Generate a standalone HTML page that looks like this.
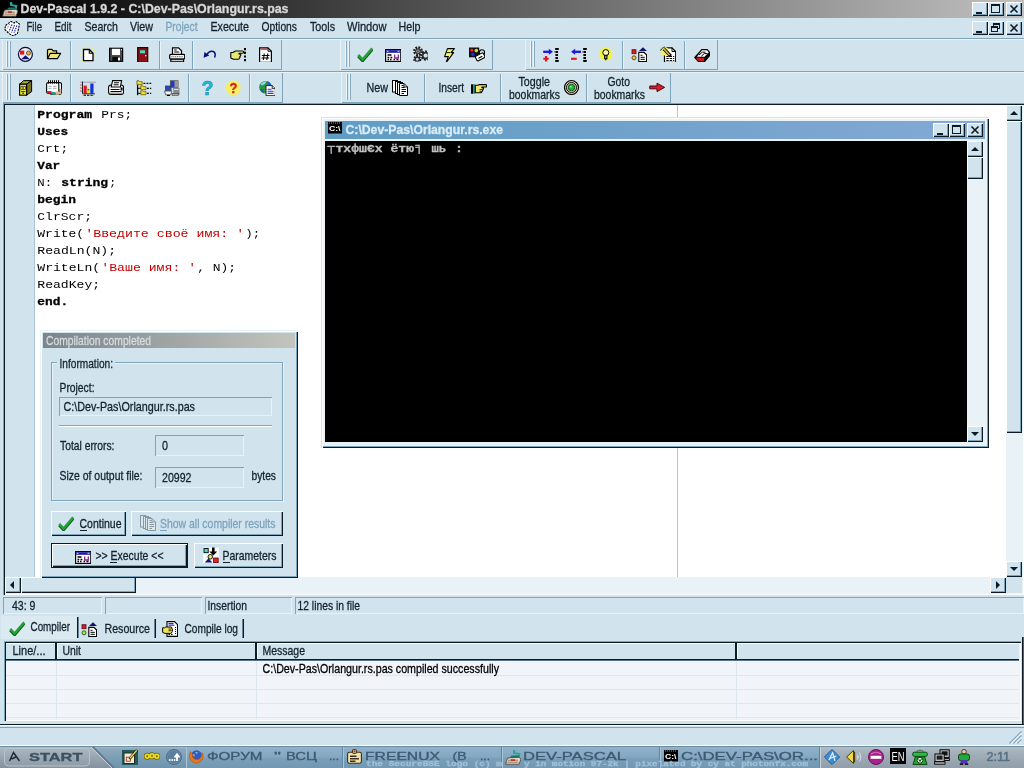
<!DOCTYPE html>
<html><head><meta charset="utf-8"><title>Dev-Pascal 1.9.2 - C:\Dev-Pas\Orlangur.rs.pas</title>
<style>
html,body{margin:0;padding:0;width:1024px;height:768px;overflow:hidden;background:#d1e3ed;}
#r{position:relative;width:1024px;height:768px;overflow:hidden;font-family:"Liberation Sans",sans-serif;}
#r>div,#r>svg{position:absolute;}
#r>svg{will-change:transform;}
#t{left:0;top:0;will-change:transform;}
</style></head><body><div id="r">
<div style="left:0px;top:0px;width:1024px;height:18px;background:linear-gradient(90deg,#000 0%,#c0c0c0 100%);"></div>
<svg style="left:2px;top:1px" width="16" height="16" viewBox="0 0 16 16"><path d="M8 1h2.2v2.2l5.3 1-1 4.3h-2.2l.8-2.8-5.1-1z" fill="#2aa39b"/><path d="M6.5 6.5h7l1.5 2h-10z" fill="#1f6f6a"/><path d="M2.5 9L14 8.3l2 1.7-2 5.2H.6z" fill="#e6dcc4" stroke="#4a3c30" stroke-width=".8"/><path d="M3 11.2h10M2.3 13.2h11" stroke="#8a6a58" stroke-width=".9"/><rect x="6" y="10.3" width="4" height="1.6" fill="#b03030"/></svg>
<div style="left:972px;top:2px;width:16px;height:14px;background:#d1e3ed;box-shadow:inset 1px 1px 0 #ffffff,inset -1px -1px 0 #0c1a26,inset -2px -2px 0 #7fa5bd;"></div>
<svg style="left:972px;top:2px" width="16" height="14" viewBox="0 0 16 14"><rect x="4" y="10" width="6" height="2" fill="#0c1a26"/></svg>
<div style="left:988px;top:2px;width:16px;height:14px;background:#d1e3ed;box-shadow:inset 1px 1px 0 #ffffff,inset -1px -1px 0 #0c1a26,inset -2px -2px 0 #7fa5bd;"></div>
<svg style="left:988px;top:2px" width="16" height="14" viewBox="0 0 16 14"><rect x="3.5" y="2.5" width="8" height="8" fill="none" stroke="#0c1a26"/><rect x="3" y="2" width="9" height="2" fill="#0c1a26"/></svg>
<div style="left:1006px;top:2px;width:16px;height:14px;background:#d1e3ed;box-shadow:inset 1px 1px 0 #ffffff,inset -1px -1px 0 #0c1a26,inset -2px -2px 0 #7fa5bd;"></div>
<svg style="left:1006px;top:2px" width="16" height="14" viewBox="0 0 16 14"><path d="M4.5 3.5l7 7M11.5 3.5l-7 7" stroke="#0c1a26" stroke-width="1.6" fill="none"/></svg>
<svg style="left:4px;top:20px" width="16" height="16" viewBox="0 0 16 16"><path d="M1.5 5.5L7 1.5l3 1.5 2-1.5 3.5 2.5-2 9.5-4.500 2.500-4-2.500L.8 9.500z" fill="#fff" stroke="#000" stroke-width="1.1" stroke-dasharray="2.2 .9"/><path d="M8 4.500l-3 7M10.5 5l-3 7.500M13 5.500l-3 7.500" stroke="#2028b8" stroke-width="1.1" stroke-dasharray="1.6 .8"/><path d="M5.500 4l-2.500 5" stroke="#555" stroke-width=".9" stroke-dasharray="1 1"/></svg>
<div style="left:972px;top:21px;width:16px;height:14px;background:#d1e3ed;box-shadow:inset 1px 1px 0 #ffffff,inset -1px -1px 0 #0c1a26,inset -2px -2px 0 #7fa5bd;"></div>
<svg style="left:972px;top:21px" width="16" height="14" viewBox="0 0 16 14"><rect x="4" y="10" width="6" height="2" fill="#0c1a26"/></svg>
<div style="left:988px;top:21px;width:16px;height:14px;background:#d1e3ed;box-shadow:inset 1px 1px 0 #ffffff,inset -1px -1px 0 #0c1a26,inset -2px -2px 0 #7fa5bd;"></div>
<svg style="left:988px;top:21px" width="16" height="14" viewBox="0 0 16 14"><rect x="5.5" y="2.5" width="6" height="5" fill="none" stroke="#0c1a26"/><rect x="5" y="2" width="7" height="2" fill="#0c1a26"/><rect x="3.5" y="5.5" width="6" height="5" fill="#d1e3ed" stroke="#0c1a26"/><rect x="3" y="5" width="7" height="2" fill="#0c1a26"/></svg>
<div style="left:1006px;top:21px;width:16px;height:14px;background:#d1e3ed;box-shadow:inset 1px 1px 0 #ffffff,inset -1px -1px 0 #0c1a26,inset -2px -2px 0 #7fa5bd;"></div>
<svg style="left:1006px;top:21px" width="16" height="14" viewBox="0 0 16 14"><path d="M4.5 3.5l7 7M11.5 3.5l-7 7" stroke="#0c1a26" stroke-width="1.6" fill="none"/></svg>
<div style="left:0px;top:38px;width:1024px;height:1px;background:#7fa5bd;"></div>
<div style="left:0px;top:39px;width:1024px;height:1px;background:#e9f2f7;"></div>
<div style="left:0px;top:71px;width:1024px;height:1px;background:#7fa5bd;"></div>
<div style="left:0px;top:72px;width:1024px;height:1px;background:#e9f2f7;"></div>
<div style="left:2px;top:39px;width:280px;height:31px;box-shadow:inset 1px 1px 0 #e9f2f7,inset -1px -1px 0 #7fa5bd;"></div>
<div style="left:6px;top:41px;width:1px;height:26px;background:#eef5f9;"></div>
<div style="left:7px;top:41px;width:1px;height:26px;background:#86a9c0;"></div>
<div style="left:9px;top:41px;width:1px;height:26px;background:#eef5f9;"></div>
<div style="left:10px;top:41px;width:1px;height:26px;background:#86a9c0;"></div>
<svg style="left:17px;top:46px" width="16" height="16" viewBox="0 0 16 16"><circle cx="8.4" cy="8.300" r="7" fill="#e4eef3" stroke="#0c0c34" stroke-width="1.200"/><rect x="3" y="4.600" width="4.200" height="4" fill="#e01822"/><circle cx="11.500" cy="7" r="2" fill="#f6b44a" stroke="#5a3a08" stroke-width=".8"/><path d="M8.500 9.300L12.800 13.200H4.200z" fill="#101078"/></svg>
<svg style="left:46px;top:46px" width="16" height="16" viewBox="0 0 16 16"><path d="M1.500 12.500V4.200Q1.500 3.300 2.500 3.300H5.800L7.200 4.800H10.600V7.300" fill="#efe67c" stroke="#000" stroke-width="1.200"/><path d="M1.500 12.700L4.300 7.300H14.700L11.300 12.700z" fill="#efe67c" stroke="#000" stroke-width="1.200" stroke-linejoin="round"/></svg>
<svg style="left:80px;top:46px" width="16" height="16" viewBox="0 0 16 16"><g fill="#f2f44a"><rect x="1" y="2.500" width="1.600" height="1.600"/><rect x=".2" y="8.500" width="1.600" height="1.600"/><rect x="14" y="3" width="1.600" height="1.600"/><rect x="14.300" y="8.500" width="1.600" height="1.600"/><rect x="6" y=".6" width="1.600" height="1.600"/><rect x="11" y="1" width="1.600" height="1.600"/><rect x="1.500" y="13.500" width="1.600" height="1.600"/></g><path d="M3.500 3.500H9.300L13 7.200V14.600H3.500z" fill="#fff" stroke="#000" stroke-width="1.300"/><path d="M9.300 3.500V7.200H13" fill="none" stroke="#000" stroke-width="1.100"/></svg>
<svg style="left:108px;top:46px" width="16" height="16" viewBox="0 0 16 16"><rect x="1.600" y="2.300" width="13" height="13" fill="#4e4e4e" stroke="#000" stroke-width="1.200"/><rect x="4" y="2.800" width="8" height="6.200" fill="#fff"/><rect x="4.300" y="10.800" width="8.200" height="4.200" fill="#0a0a0a"/><rect x="10" y="11.500" width="2" height="3" fill="#fff"/><rect x="13" y="3.200" width="1" height="1" fill="#fff"/></svg>
<svg style="left:136px;top:46px" width="16" height="16" viewBox="0 0 16 16"><rect x="1.700" y="1.600" width="10" height="14.800" fill="#8c1016" stroke="#1a0204" stroke-width="1.200"/><rect x="4" y="4.300" width="5" height="3" fill="#46dcc4"/><circle cx="9.800" cy="9.800" r=".8" fill="#fff"/></svg>
<svg style="left:169px;top:46px" width="16" height="16" viewBox="0 0 16 16"><path d="M3.500 8.500V1.800H9.500L12.500 4.800V8.500" fill="#fff" stroke="#000" stroke-width="1.200"/><path d="M5.200 4h2.500M5.200 6h5" stroke="#000" stroke-width="1.100"/><rect x=".7" y="8.300" width="15" height="4.800" rx="1.200" fill="#f4f4f4" stroke="#000" stroke-width="1.200"/><path d="M2.500 10.600h11.500" stroke="#777" stroke-width="1.400" stroke-dasharray="1 .8"/><rect x="1.800" y="13.200" width="12.800" height="2.600" fill="#c8c8c8" stroke="#000" stroke-width="1.100"/></svg>
<svg style="left:202px;top:46px" width="16" height="16" viewBox="0 0 16 16"><path d="M4.500 9Q7.500 4.200 11.300 5.500Q14.300 7 12.600 11.600" stroke="#10107c" stroke-width="1.500" fill="none"/><path d="M1.600 11.800L2.500 6 7.300 9.600z" fill="#10107c"/></svg>
<svg style="left:230px;top:46px" width="16" height="16" viewBox="0 0 16 16"><path d="M15 2v14" stroke="#000" stroke-width="2" stroke-dasharray="2.200 1.500"/><path d="M.8 6.500H3L5.500 5H12.500Q13.800 5 13.800 6.100Q13.800 7.200 12.500 7.200H9V8H9.800Q10.800 8 10.800 9Q10.800 10 9.800 10.200Q10.500 11.500 9.300 12Q9.500 13.200 8 13.300H3.500L.8 12z" fill="#e6ea74" stroke="#000" stroke-width="1.100" stroke-linejoin="round"/></svg>
<svg style="left:258px;top:46px" width="16" height="16" viewBox="0 0 16 16"><path d="M1.600 1.800H10L13.400 5.200V16.300H1.600z" fill="#fff" stroke="#000" stroke-width="1.200"/><path d="M10 1.800V5.200H13.400" fill="none" stroke="#000"/><path d="M2.600 3.200H9.500" stroke="#e02424" stroke-width="1.200"/><path d="M6.300 7.500L5.300 14M9.800 7.500L8.800 14M3.800 9.500H11.500M3.500 12H11.200" stroke="#000" stroke-width="1.100" fill="none"/></svg>
<div style="left:70px;top:41px;width:1px;height:28px;background:#7fa5bd;"></div>
<div style="left:71px;top:41px;width:1px;height:28px;background:#e9f2f7;"></div>
<div style="left:159px;top:41px;width:1px;height:28px;background:#7fa5bd;"></div>
<div style="left:160px;top:41px;width:1px;height:28px;background:#e9f2f7;"></div>
<div style="left:192px;top:41px;width:1px;height:28px;background:#7fa5bd;"></div>
<div style="left:193px;top:41px;width:1px;height:28px;background:#e9f2f7;"></div>
<div style="left:340px;top:39px;width:153px;height:31px;box-shadow:inset 1px 1px 0 #e9f2f7,inset -1px -1px 0 #7fa5bd;"></div>
<div style="left:345px;top:41px;width:1px;height:26px;background:#eef5f9;"></div>
<div style="left:346px;top:41px;width:1px;height:26px;background:#86a9c0;"></div>
<div style="left:348px;top:41px;width:1px;height:26px;background:#eef5f9;"></div>
<div style="left:349px;top:41px;width:1px;height:26px;background:#86a9c0;"></div>
<svg style="left:357px;top:46px" width="16" height="16" viewBox="0 0 16 16"><path d="M1.2 10.3L5.6 15 15.2 3.6" stroke="#0b5418" stroke-width="2.6" fill="none"/><path d="M1.2 9L5.6 13.6 15.2 2.4" stroke="#22a136" stroke-width="2.6" fill="none"/></svg>
<svg style="left:385px;top:46px" width="16" height="16" viewBox="0 0 16 16"><rect x=".6" y="3.600" width="15.200" height="11.800" fill="#fff" stroke="#000" stroke-width="1.200"/><rect x="1.200" y="4.200" width="14" height="2.600" fill="#1a1aa4"/><rect x="12.500" y="4.800" width="2" height="1" fill="#cfd8ff"/><rect x="2" y="4.800" width="1.500" height="1" fill="#cfd8ff"/><path d="M2.500 9h4M2.500 11.500h1.800M5.500 11.500h1.800M2.500 13.500h1.500M5 13.500h1.500M8.500 13.500h1.500M11.500 13.500h2" stroke="#000" stroke-width="1.300"/><path d="M9.700 8.500V12H13.300V8.500" stroke="#86208a" stroke-width="1.300" fill="none"/></svg>
<svg style="left:413px;top:46px" width="16" height="16" viewBox="0 0 16 16"><g fill="none" stroke="#141414"><circle cx="5" cy="5.200" r="3.700" stroke-width="2.400" stroke-dasharray="1.700 1.200"/><circle cx="12.600" cy="9.600" r="3.900" stroke-width="2.400" stroke-dasharray="1.700 1.200"/><circle cx="4.300" cy="13.300" r="3" stroke-width="2.200" stroke-dasharray="1.500 1.100"/></g><circle cx="5" cy="5.200" r="3" fill="#3a3a3a"/><circle cx="5" cy="5.200" r="1.700" fill="#9c9c9c"/><circle cx="5" cy="5.200" r=".7" fill="#222"/><circle cx="12.600" cy="9.600" r="3" fill="none" stroke="#2c2c2c" stroke-width="1.800"/><circle cx="4.300" cy="13.300" r="2.200" fill="none" stroke="#2c2c2c" stroke-width="1.600"/><rect x="14.800" y="4" width="2" height="11" fill="#d1e3ed"/><rect x="0" y="15.600" width="9" height="1.500" fill="#d1e3ed"/></svg>
<svg style="left:441px;top:46px" width="16" height="16" viewBox="0 0 16 16"><path d="M6.500 2.600H13.400L10 6.600H12.600L5 16.800L7.300 10.600H3.600z" fill="#f3f372" stroke="#000" stroke-width="1.100" stroke-linejoin="round"/><path d="M5.500 6.600H9" stroke="#000" stroke-width=".9"/></svg>
<svg style="left:469px;top:46px" width="16" height="16" viewBox="0 0 16 16"><rect x="0" y="1.500" width="10.200" height="9.800" fill="#0e0e0e"/><circle cx="2.800" cy="4.200" r="1.600" fill="#e81c24"/><circle cx="7.300" cy="4.600" r="1.800" fill="#c4e234"/><circle cx="3.800" cy="8.300" r="1.900" fill="#1c2cd4"/><circle cx="13" cy="6.500" r="2.700" fill="none" stroke="#000" stroke-width="1.100"/><rect x="6.800" y="8.300" width="8.800" height="5.200" rx="1.200" transform="rotate(-28 11.200 11)" fill="#fff" stroke="#000" stroke-width="1.100"/><path d="M9.500 12.300l3.800-2" stroke="#000" stroke-width="1.100"/></svg>
<div style="left:525px;top:39px;width:193px;height:31px;box-shadow:inset 1px 1px 0 #e9f2f7,inset -1px -1px 0 #7fa5bd;"></div>
<div style="left:530px;top:41px;width:1px;height:26px;background:#eef5f9;"></div>
<div style="left:531px;top:41px;width:1px;height:26px;background:#86a9c0;"></div>
<div style="left:533px;top:41px;width:1px;height:26px;background:#eef5f9;"></div>
<div style="left:534px;top:41px;width:1px;height:26px;background:#86a9c0;"></div>
<svg style="left:543px;top:46px" width="16" height="16" viewBox="0 0 16 16"><path d="M.2 5.800H7" stroke="#1a1ad8" stroke-width="2.300"/><path d="M5.800 2.800L10 5.800 5.800 8.800z" fill="#1a1ad8"/><path d="M.3 12.800H5.700M3 10.100V15.500" stroke="#e41424" stroke-width="2.100"/><path d="M13.700 2V15.800" stroke="#000" stroke-width="2.600" stroke-dasharray="1.900 1.100"/><rect x="12.400" y="2" width="3.400" height="1.900" fill="#000"/><rect x="12.400" y="13.900" width="3.400" height="1.900" fill="#000"/><rect x="11.200" y="5" width="1.400" height="1.500" fill="#c03a7a"/></svg>
<svg style="left:571px;top:46px" width="16" height="16" viewBox="0 0 16 16"><path d="M3 5.800H10" stroke="#1a1ad8" stroke-width="2.300"/><path d="M4.200 2.800L0 5.800 4.200 8.800z" fill="#1a1ad8"/><path d="M0 12.800H5.700" stroke="#e41424" stroke-width="2.100"/><path d="M13.700 2V15.800" stroke="#000" stroke-width="2.600" stroke-dasharray="1.900 1.100"/><rect x="12.400" y="2" width="3.400" height="1.900" fill="#000"/><rect x="12.400" y="13.900" width="3.400" height="1.900" fill="#000"/><rect x="11.200" y="5" width="1.400" height="1.500" fill="#c03a7a"/></svg>
<svg style="left:598px;top:46px" width="16" height="16" viewBox="0 0 16 16"><circle cx="7.800" cy="8" r="6.600" fill="#f3f33e"/><circle cx="7.800" cy="6.600" r="3" fill="#fffbb0" stroke="#000" stroke-width="1"/><rect x="6.600" y="9.300" width="2.400" height="3.400" fill="#8a8a8a" stroke="#000" stroke-width=".9"/><path d="M7.800 12.700v1.500" stroke="#000" stroke-width="1.200"/></svg>
<svg style="left:631px;top:46px" width="16" height="16" viewBox="0 0 16 16"><rect x="1" y="3.700" width="4" height="4" fill="#dc1c2c" stroke="#5a0a10" stroke-width=".8"/><path d="M12 1.200L16 4.900H8z" fill="#14146c"/><circle cx="3" cy="11.800" r="2" fill="#f6c448" stroke="#5a3c08" stroke-width=".9"/><path d="M7.800 6.400H13L15.600 9V15.600H7.800z" fill="#fff" stroke="#000" stroke-width="1.100"/><path d="M9.500 9.300h2M9.500 11.300h4.300M9.500 13.300h4.300" stroke="#000" stroke-width="1"/></svg>
<svg style="left:660px;top:46px" width="16" height="16" viewBox="0 0 16 16"><path d="M4.500 1.800H12L15.700 5.500V16.300H4.500z" fill="#fff" stroke="#000" stroke-width="1.200"/><path d="M12 1.800V5.500H15.700" fill="none" stroke="#000"/><path d="M6.300 10.500h8M6.300 12.500h8M6.300 14.500h8" stroke="#000" stroke-width="1.100" stroke-dasharray="2.400 1"/><circle cx="4.600" cy="5.300" r="4.300" fill="#eef06e"/><path d="M.6 4.500Q1.500 1.500 4.800 1" stroke="#000" stroke-width="1" fill="none"/><path d="M1 3Q2 1.500 3.500 1.200" stroke="#5ad8a8" stroke-width="1.200" fill="none"/><path d="M3.800 2.800L10.800 10.200" stroke="#000" stroke-width="3.200"/><path d="M3.600 2.600L9.600 9" stroke="#d2b050" stroke-width="1.700"/></svg>
<svg style="left:694px;top:46px" width="16" height="16" viewBox="0 0 16 16"><path d="M0 11.500L7.500 3H13.500L16 6V10L11 16H4z" fill="#0a0406"/><path d="M3 10.700L8 4.300H13L14.800 6.500L10.500 10.700z" fill="#fff"/><path d="M5 9L8.300 6.200H11.500M7.300 10.200L10.300 7.600H13.600" stroke="#000" stroke-width="1" fill="none"/><path d="M1.600 11.800H10.300L10 15H4.600z" fill="#cc1626"/></svg>
<div style="left:622px;top:41px;width:1px;height:28px;background:#7fa5bd;"></div>
<div style="left:623px;top:41px;width:1px;height:28px;background:#e9f2f7;"></div>
<div style="left:684px;top:41px;width:1px;height:28px;background:#7fa5bd;"></div>
<div style="left:685px;top:41px;width:1px;height:28px;background:#e9f2f7;"></div>
<div style="left:2px;top:72px;width:281px;height:31px;box-shadow:inset 1px 1px 0 #e9f2f7,inset -1px -1px 0 #7fa5bd;"></div>
<div style="left:6px;top:74px;width:1px;height:26px;background:#eef5f9;"></div>
<div style="left:7px;top:74px;width:1px;height:26px;background:#86a9c0;"></div>
<div style="left:9px;top:74px;width:1px;height:26px;background:#eef5f9;"></div>
<div style="left:10px;top:74px;width:1px;height:26px;background:#86a9c0;"></div>
<svg style="left:18px;top:80px" width="16" height="16" viewBox="0 0 16 16"><path d="M1.600 4.200L5.600 .6H13.600L8.600 4.200z" fill="#a6a634" stroke="#000" stroke-width="1"/><path d="M8.600 4.200L13.600 .6V11.600L8.600 15.200z" fill="#74741c" stroke="#000" stroke-width="1"/><rect x="1.600" y="4.200" width="7" height="11" fill="#ece632" stroke="#000" stroke-width="1.100"/><rect x="2.900" y="6.300" width="4.400" height="3.200" fill="#f6f25a" stroke="#222" stroke-width=".7"/><path d="M2.900 11.500h4.400" stroke="#222" stroke-width=".8"/><path d="M4.200 8h1.800M4.200 13.200h1.800" stroke="#000" stroke-width="1"/></svg>
<svg style="left:46px;top:80px" width="16" height="16" viewBox="0 0 16 16"><rect x="3.500" y="2.600" width="12" height="11.500" rx="1.600" fill="#fff" stroke="#000" stroke-width="1.100"/><rect x="13" y="9" width="2.300" height="5" fill="#d8b88a"/><rect x=".6" y="2.600" width="12.200" height="10.800" rx="1.600" fill="#fff" stroke="#000" stroke-width="1.100"/><path d="M2.500 .2V3.600M4.500 .2V3.600M6.500 .2V3.600M8.500 .2V3.600M10.500 .2V3.600M12.500 .2V3.600" stroke="#000" stroke-width="1"/><path d="M2.500 6.300h3M7 6.300h3.500M2.500 8.300h3M7 8.300h3.500" stroke="#9aa" stroke-width="1"/><rect x="1.200" y="11" width="4.300" height="2.600" fill="#d82030"/><rect x="5.500" y="12" width="4" height="2.600" fill="#2a9a90"/><rect x="9.500" y="11.500" width="3.500" height="3.300" fill="#d8b88a"/></svg>
<svg style="left:80px;top:80px" width="16" height="16" viewBox="0 0 16 16"><path d="M0 2.200H16.400" stroke="#9aa0a8" stroke-width="1"/><path d="M2.500 1.500V13.600" stroke="#222" stroke-width="1"/><path d="M0 5h2M0 8h2M0 11h2" stroke="#e03a4a" stroke-width=".9"/><rect x="3.600" y="5.600" width="3.200" height="8" fill="#e21424"/><rect x="6.800" y="8.600" width="3.200" height="5" fill="#f4e224"/><rect x="7.500" y="9.300" width="1.800" height="1" fill="#222"/><rect x="10.300" y="3.500" width="3.200" height="10.100" fill="#1430da"/><path d="M2.500 13.800H15" stroke="#222" stroke-width=".9"/><path d="M3.600 15.200H14" stroke="#000" stroke-width="1.100" stroke-dasharray="2.400 1"/></svg>
<svg style="left:108px;top:80px" width="16" height="16" viewBox="0 0 16 16"><rect x=".6" y="5" width="15" height="9.500" rx="2.400" fill="#fff" stroke="#000" stroke-width="1.100"/><path d="M3.200 7L4.600 .6H13.600L12.400 7z" fill="#fff" stroke="#000" stroke-width="1.100"/><path d="M6 2.800h5M5.600 4.800h5" stroke="#000" stroke-width="1"/><path d="M2.500 9.500h9M2.500 11.500h11" stroke="#000" stroke-width="1"/><path d="M2 13.200h12" stroke="#888" stroke-width="1.200"/><rect x="12.600" y="7.500" width="2" height="3" fill="#000"/></svg>
<svg style="left:136px;top:80px" width="16" height="16" viewBox="0 0 16 16"><path d="M1.600 .8V15.200" stroke="#000" stroke-width="1.300"/><path d="M1.600 3.400h2M1.600 8.300h3.500M1.600 13.300h3.500" stroke="#000" stroke-width="1"/><g fill="#f0e23e" stroke="#6a5a00" stroke-width=".8"><path d="M1 .8h2l.8.900h2.400v3H1z"/><path d="M4.800 5.800h2l.8.900h2.400v3H4.800z"/><path d="M4.800 10.800h2l.8.900h2.400v3H4.800z"/></g><path d="M7.500 3.400H15.200M11 8.300H15.200M11 13.300H15.200" stroke="#000" stroke-width="1.200" stroke-dasharray="1.800 1.200"/></svg>
<svg style="left:164px;top:80px" width="16" height="16" viewBox="0 0 16 16"><rect x="6.500" y=".8" width="7.500" height="6.500" fill="#1c3cd0" stroke="#555" stroke-width="1"/><rect x="10.500" y=".8" width="3.600" height="6.500" fill="#9a9a9a"/><path d="M9 8h6.500v6.500H9.500z" fill="#8a8a8a"/><path d="M10 9.500h4.500" stroke="#ddd" stroke-width="1"/><rect x="1.500" y="6" width="5.500" height="4.800" fill="#2244d8" stroke="#444" stroke-width=".9"/><path d="M.6 11h7.200l-1 3.800H1.600z" fill="#f4f4f4" stroke="#555" stroke-width=".9"/><path d="M8 13.500h7l-1 2.300H8.500z" fill="#b0b0b0" stroke="#444" stroke-width=".8"/><path d="M3 15.500h3" stroke="#000" stroke-width="1.200"/></svg>
<svg style="left:259px;top:80px" width="16" height="16" viewBox="0 0 16 16"><circle cx="6.500" cy="7.200" r="6.300" fill="#2a9440"/><path d="M1.500 4Q4 1 7.500 1.200L6 4 3 5.500z" fill="#8ad4f0"/><path d="M1 9.500Q3 8 4.500 9.500L5 13Q2 12 1 9.500z" fill="#2058d0"/><path d="M8 1.200Q11.500 2 12.500 5.500L9.500 5z" fill="#2058d0"/><path d="M7 5.600H13.200L16.300 8.600V15.700H7z" fill="#fff" stroke="#222" stroke-width="1"/><path d="M13.200 5.600V8.600H16.300" fill="#d8c890" stroke="#222" stroke-width=".9"/><path d="M8.600 9.300h4M8.600 11.300h6M8.600 13.400h6" stroke="#1a38d0" stroke-width="1.100"/></svg>
<div style="left:70px;top:74px;width:1px;height:28px;background:#7fa5bd;"></div>
<div style="left:71px;top:74px;width:1px;height:28px;background:#e9f2f7;"></div>
<div style="left:188px;top:74px;width:1px;height:28px;background:#7fa5bd;"></div>
<div style="left:189px;top:74px;width:1px;height:28px;background:#e9f2f7;"></div>
<div style="left:249px;top:74px;width:1px;height:28px;background:#7fa5bd;"></div>
<div style="left:250px;top:74px;width:1px;height:28px;background:#e9f2f7;"></div>
<svg style="left:225px;top:80px" width="16" height="16" viewBox="0 0 16 16"><circle cx="8.300" cy="7.800" r="7.400" fill="#f7ef62"/></svg>
<div style="left:341px;top:72px;width:330px;height:31px;box-shadow:inset 1px 1px 0 #e9f2f7,inset -1px -1px 0 #7fa5bd;"></div>
<div style="left:346px;top:74px;width:1px;height:26px;background:#eef5f9;"></div>
<div style="left:347px;top:74px;width:1px;height:26px;background:#86a9c0;"></div>
<div style="left:349px;top:74px;width:1px;height:26px;background:#eef5f9;"></div>
<div style="left:350px;top:74px;width:1px;height:26px;background:#86a9c0;"></div>
<svg style="left:392px;top:80px" width="16" height="16" viewBox="0 0 16 16"><rect x=".5" y=".5" width="5" height="11.500" fill="#fff" stroke="#000" stroke-width="1"/><rect x="3.500" y="1.500" width="5" height="12" fill="#fff" stroke="#000" stroke-width="1"/><rect x="5.500" y="2.500" width="5" height="12" fill="#fff" stroke="#000" stroke-width="1"/><path d="M7.500 3.500H12L15.500 7V15.500H7.500z" fill="#fff" stroke="#000" stroke-width="1"/><path d="M12 3.500V7H15.500" fill="none" stroke="#000" stroke-width=".9"/><path d="M9.500 5.500h2M9.500 7.500h3M9.500 9.500h4.500M9.500 11.500h4.500M9.500 13.500h2.500" stroke="#000" stroke-width="1"/></svg>
<div style="left:424px;top:74px;width:1px;height:28px;background:#7fa5bd;"></div>
<div style="left:425px;top:74px;width:1px;height:28px;background:#e9f2f7;"></div>
<svg style="left:471px;top:80px" width="16" height="16" viewBox="0 0 16 16"><rect x="0" y="4.300" width="2.300" height="9.400" fill="#000"/><rect x="2.300" y="4.300" width="1.900" height="9.400" fill="#1f8c7c"/><path d="M4.300 5.200H7L8.500 4.600H14.600Q15.800 4.600 15.800 5.800Q15.800 7 14.600 7H10.800V7.600H11.600Q12.600 7.700 12.500 8.700Q12.400 9.600 11.500 9.700Q12 11 10.900 11.400Q11 12.600 9.800 12.800H4.300z" fill="#f0e86a" stroke="#000" stroke-width="1.100" stroke-linejoin="round"/><path d="M8.500 9.600h2.500M8.500 11.300h2" stroke="#000" stroke-width=".8"/></svg>
<div style="left:500px;top:74px;width:1px;height:28px;background:#7fa5bd;"></div>
<div style="left:501px;top:74px;width:1px;height:28px;background:#e9f2f7;"></div>
<svg style="left:564px;top:79px" width="16" height="16" viewBox="0 0 16 16"><circle cx="7.500" cy="8.500" r="7" fill="#ddd6b6" stroke="#000" stroke-width="1.200"/><circle cx="7.500" cy="8.500" r="5" fill="none" stroke="#000" stroke-width="1"/><circle cx="7.500" cy="8.500" r="3.200" fill="#1cbc3c" stroke="#0a5016" stroke-width="1"/><circle cx="6.800" cy="7.800" r="1" fill="#7aec8c"/></svg>
<div style="left:586px;top:74px;width:1px;height:28px;background:#7fa5bd;"></div>
<div style="left:587px;top:74px;width:1px;height:28px;background:#e9f2f7;"></div>
<svg style="left:649px;top:79px" width="16" height="16" viewBox="0 0 16 16"><path d="M.8 7H8V4.200L15.600 8.400L8 12.600V9.800H.8z" fill="#e21828" stroke="#4a0408" stroke-width="1" stroke-linejoin="round"/></svg>
<div style="left:3px;top:103px;width:1021px;height:492px;background:#fff;box-shadow:inset 1px 1px 0 #7fa5bd,inset 2px 2px 0 #0c1a26,inset -1px -1px 0 #ffffff,inset -2px -2px 0 #e9f2f7;"></div>
<div style="left:5px;top:105px;width:29px;height:472px;background:#d1e3ed;"></div>
<div style="left:34px;top:105px;width:1px;height:472px;background:#a9c4d4;"></div>
<div style="left:677px;top:105px;width:1px;height:472px;background:#c0c0c0;"></div>
<div style="left:1006px;top:105px;width:16px;height:472px;background:#e9f2f7;"></div>
<div style="left:1006px;top:105px;width:16px;height:16px;background:#d1e3ed;box-shadow:inset 1px 1px 0 #ffffff,inset -1px -1px 0 #0c1a26,inset -2px -2px 0 #7fa5bd;"></div>
<svg style="left:1006px;top:105px" width="16" height="16" viewBox="0 0 16 16"><path d="M4 10h8l-4-4z" fill="#0c1a26"/></svg>
<div style="left:1006px;top:121px;width:16px;height:312px;background:#d1e3ed;box-shadow:inset 1px 1px 0 #ffffff,inset -1px -1px 0 #0c1a26,inset -2px -2px 0 #7fa5bd;"></div>
<div style="left:1006px;top:561px;width:16px;height:16px;background:#d1e3ed;box-shadow:inset 1px 1px 0 #ffffff,inset -1px -1px 0 #0c1a26,inset -2px -2px 0 #7fa5bd;"></div>
<svg style="left:1006px;top:561px" width="16" height="16" viewBox="0 0 16 16"><path d="M4 6h8l-4 4z" fill="#0c1a26"/></svg>
<div style="left:5px;top:577px;width:1001px;height:16px;background:#e9f2f7;"></div>
<div style="left:5px;top:577px;width:16px;height:16px;background:#d1e3ed;box-shadow:inset 1px 1px 0 #ffffff,inset -1px -1px 0 #0c1a26,inset -2px -2px 0 #7fa5bd;"></div>
<svg style="left:5px;top:577px" width="16" height="16" viewBox="0 0 16 16"><path d="M9 4v8l-4-4z" fill="#0c1a26"/></svg>
<div style="left:21px;top:577px;width:115px;height:16px;background:#d1e3ed;box-shadow:inset 1px 1px 0 #ffffff,inset -1px -1px 0 #0c1a26,inset -2px -2px 0 #7fa5bd;"></div>
<div style="left:990px;top:577px;width:16px;height:16px;background:#d1e3ed;box-shadow:inset 1px 1px 0 #ffffff,inset -1px -1px 0 #0c1a26,inset -2px -2px 0 #7fa5bd;"></div>
<svg style="left:990px;top:577px" width="16" height="16" viewBox="0 0 16 16"><path d="M6 4v8l4-4z" fill="#0c1a26"/></svg>
<div style="left:1006px;top:577px;width:16px;height:16px;background:#d1e3ed;"></div>
<div style="left:40px;top:330px;width:258px;height:248px;background:#d1e3ed;box-shadow:inset 1px 1px 0 #e9f2f7,inset 2px 2px 0 #ffffff,inset -1px -1px 0 #0c1a26,inset -2px -2px 0 #7fa5bd;"></div>
<div style="left:43px;top:333px;width:252px;height:15px;background:linear-gradient(90deg,#7c858b,#c3c4bd);"></div>
<div style="left:51px;top:362px;width:232px;height:139px;border:1px solid #7fa5bd;box-sizing:border-box;box-shadow:1px 1px 0 #e9f2f7,inset 1px 1px 0 #e9f2f7;"></div>
<div style="left:57px;top:358px;width:58px;height:12px;background:#d1e3ed;"></div>
<div style="left:59px;top:397px;width:213px;height:19px;box-shadow:inset 1px 1px 0 #7fa5bd,inset -1px -1px 0 #e9f2f7;"></div>
<div style="left:59px;top:425px;width:213px;height:1px;background:#7fa5bd;"></div>
<div style="left:59px;top:426px;width:213px;height:1px;background:#ffffff;"></div>
<div style="left:155px;top:435px;width:89px;height:21px;box-shadow:inset 1px 1px 0 #7fa5bd,inset -1px -1px 0 #e9f2f7;"></div>
<div style="left:155px;top:467px;width:89px;height:21px;box-shadow:inset 1px 1px 0 #7fa5bd,inset -1px -1px 0 #e9f2f7;"></div>
<div style="left:51px;top:511px;width:75px;height:25px;background:#d1e3ed;box-shadow:inset 1px 1px 0 #ffffff,inset -1px -1px 0 #0c1a26,inset -2px -2px 0 #7fa5bd;"></div>
<svg style="left:58px;top:515px" width="16" height="16" viewBox="0 0 16 16"><path d="M1.2 10.3L5.6 15 15.2 3.6" stroke="#0b5418" stroke-width="2.6" fill="none"/><path d="M1.2 9L5.6 13.6 15.2 2.4" stroke="#22a136" stroke-width="2.6" fill="none"/></svg>
<div style="left:80px;top:530px;width:7px;height:1px;background:#13222e;"></div>
<div style="left:131px;top:511px;width:152px;height:25px;background:#d1e3ed;box-shadow:inset 1px 1px 0 #ffffff,inset -1px -1px 0 #0c1a26,inset -2px -2px 0 #7fa5bd;"></div>
<svg style="left:140px;top:515px" width="16" height="16" viewBox="0 0 16 16"><rect x=".5" y=".5" width="5" height="11.500" fill="#dbe8ef" stroke="#87969f" stroke-width="1"/><rect x="3.500" y="1.500" width="5" height="12" fill="#dbe8ef" stroke="#87969f" stroke-width="1"/><rect x="5.500" y="2.500" width="5" height="12" fill="#dbe8ef" stroke="#87969f" stroke-width="1"/><path d="M7.500 3.500H12L15.500 7V15.500H7.500z" fill="#dbe8ef" stroke="#87969f" stroke-width="1"/><path d="M12 3.500V7H15.500" fill="none" stroke="#87969f" stroke-width=".9"/><path d="M9.500 5.500h2M9.500 7.500h3M9.500 9.500h4.500M9.500 11.500h4.500M9.500 13.500h2.500" stroke="#87969f" stroke-width="1"/></svg>
<div style="left:160px;top:530px;width:7px;height:1px;background:#7ba3bd;"></div>
<div style="left:51px;top:543px;width:137px;height:25px;background:#0c1a26;"></div>
<div style="left:52px;top:544px;width:135px;height:23px;background:#d1e3ed;box-shadow:inset 1px 1px 0 #ffffff,inset -1px -1px 0 #0c1a26,inset -2px -2px 0 #7fa5bd;"></div>
<svg style="left:75px;top:548px" width="16" height="16" viewBox="0 0 16 16"><rect x=".6" y="3.600" width="15.200" height="11.800" fill="#fff" stroke="#000" stroke-width="1.200"/><rect x="1.200" y="4.200" width="14" height="2.600" fill="#1a1aa4"/><rect x="12.500" y="4.800" width="2" height="1" fill="#cfd8ff"/><rect x="2" y="4.800" width="1.500" height="1" fill="#cfd8ff"/><path d="M2.500 9h4M2.500 11.500h1.800M5.500 11.500h1.800M2.500 13.500h1.500M5 13.500h1.500M8.500 13.500h1.500M11.500 13.500h2" stroke="#000" stroke-width="1.300"/><path d="M9.700 8.500V12H13.300V8.500" stroke="#86208a" stroke-width="1.300" fill="none"/></svg>
<div style="left:110px;top:562px;width:7px;height:1px;background:#13222e;"></div>
<div style="left:194px;top:543px;width:89px;height:25px;background:#d1e3ed;box-shadow:inset 1px 1px 0 #ffffff,inset -1px -1px 0 #0c1a26,inset -2px -2px 0 #7fa5bd;"></div>
<svg style="left:203px;top:547px" width="16" height="16" viewBox="0 0 16 16"><path d="M0 .5H16V16H0z" fill="#fff" opacity=".85"/><rect x="1" y="1.500" width="4.200" height="4.200" fill="#46e0d0" stroke="#000" stroke-width=".9"/><path d="M9 .6h2.600v4H14.200L10.300 8.600L6.400 4.600H9z" fill="#000"/><circle cx="7.300" cy="9.800" r="2.300" fill="#e8e264" stroke="#000" stroke-width=".9"/><path d="M5.500 11.200L9.300 15.600H1.800z" fill="#14147c"/><rect x="10.600" y="11" width="4.600" height="4.600" fill="#e4202c" stroke="#5a060a" stroke-width=".8"/></svg>
<div style="left:223px;top:562px;width:7px;height:1px;background:#13222e;"></div>
<div style="left:321px;top:117px;width:668px;height:331px;background:#e9f2f7;box-shadow:inset 1px 1px 0 #d1e3ed,inset 2px 2px 0 #ffffff,inset -1px -1px 0 #0c1a26,inset -2px -2px 0 #7fa5bd;"></div>
<div style="left:325px;top:121px;width:660px;height:18px;background:linear-gradient(90deg,#5f9cc4,#84a9d4);"></div>
<svg style="left:328px;top:122px" width="14" height="13" viewBox="0 0 14 13"><rect x="0" y="0" width="14" height="11.500" fill="#000"/><path d="M1 1h12" stroke="#9a9a9a" stroke-width="1.200" stroke-dasharray="1 1"/><text x="1" y="9.300" font-family='"Liberation Sans",sans-serif' font-size="7.500" font-weight="bold" fill="#fff" textLength="11.500" lengthAdjust="spacingAndGlyphs">C:\</text></svg>
<div style="left:933px;top:123px;width:16px;height:14px;background:#d1e3ed;box-shadow:inset 1px 1px 0 #ffffff,inset -1px -1px 0 #0c1a26,inset -2px -2px 0 #7fa5bd;"></div>
<svg style="left:933px;top:123px" width="16" height="14" viewBox="0 0 16 14"><rect x="4" y="10" width="6" height="2" fill="#0c1a26"/></svg>
<div style="left:949px;top:123px;width:16px;height:14px;background:#d1e3ed;box-shadow:inset 1px 1px 0 #ffffff,inset -1px -1px 0 #0c1a26,inset -2px -2px 0 #7fa5bd;"></div>
<svg style="left:949px;top:123px" width="16" height="14" viewBox="0 0 16 14"><rect x="3.5" y="2.5" width="8" height="8" fill="none" stroke="#0c1a26"/><rect x="3" y="2" width="9" height="2" fill="#0c1a26"/></svg>
<div style="left:967px;top:123px;width:16px;height:14px;background:#d1e3ed;box-shadow:inset 1px 1px 0 #ffffff,inset -1px -1px 0 #0c1a26,inset -2px -2px 0 #7fa5bd;"></div>
<svg style="left:967px;top:123px" width="16" height="14" viewBox="0 0 16 14"><path d="M4.5 3.5l7 7M11.5 3.5l-7 7" stroke="#0c1a26" stroke-width="1.6" fill="none"/></svg>
<div style="left:325px;top:141px;width:642px;height:301px;background:#000;"></div>
<div style="left:967px;top:141px;width:16px;height:301px;background:#e9f2f7;"></div>
<div style="left:967px;top:141px;width:16px;height:16px;background:#d1e3ed;box-shadow:inset 1px 1px 0 #ffffff,inset -1px -1px 0 #0c1a26,inset -2px -2px 0 #7fa5bd;"></div>
<svg style="left:967px;top:141px" width="16" height="16" viewBox="0 0 16 16"><path d="M4 10h8l-4-4z" fill="#0c1a26"/></svg>
<div style="left:967px;top:157px;width:16px;height:22px;background:#d1e3ed;box-shadow:inset 1px 1px 0 #ffffff,inset -1px -1px 0 #0c1a26,inset -2px -2px 0 #7fa5bd;"></div>
<div style="left:967px;top:426px;width:16px;height:16px;background:#d1e3ed;box-shadow:inset 1px 1px 0 #ffffff,inset -1px -1px 0 #0c1a26,inset -2px -2px 0 #7fa5bd;"></div>
<svg style="left:967px;top:426px" width="16" height="16" viewBox="0 0 16 16"><path d="M4 6h8l-4 4z" fill="#0c1a26"/></svg>
<div style="left:3px;top:597px;width:99px;height:17px;box-shadow:inset 1px 1px 0 #7fa5bd,inset -1px -1px 0 #e9f2f7;"></div>
<div style="left:105px;top:597px;width:97px;height:17px;box-shadow:inset 1px 1px 0 #7fa5bd,inset -1px -1px 0 #e9f2f7;"></div>
<div style="left:205px;top:597px;width:87px;height:17px;box-shadow:inset 1px 1px 0 #7fa5bd,inset -1px -1px 0 #e9f2f7;"></div>
<div style="left:295px;top:597px;width:729px;height:17px;box-shadow:inset 1px 1px 0 #7fa5bd,inset -1px -1px 0 #e9f2f7;"></div>
<div style="left:1px;top:616px;width:76px;height:23px;background:#dbe9f1;"></div>
<svg style="left:9px;top:620px" width="16" height="16" viewBox="0 0 16 16"><path d="M1.2 10.3L5.6 15 15.2 3.6" stroke="#0b5418" stroke-width="2.6" fill="none"/><path d="M1.2 9L5.6 13.6 15.2 2.4" stroke="#22a136" stroke-width="2.6" fill="none"/></svg>
<div style="left:77px;top:617px;width:1px;height:21px;background:#0c1a26;"></div>
<div style="left:78px;top:617px;width:1px;height:21px;background:#6a8498;"></div>
<svg style="left:81px;top:621px" width="16" height="16" viewBox="0 0 16 16"><rect x="1" y="3.700" width="4" height="4" fill="#dc1c2c" stroke="#5a0a10" stroke-width=".8"/><path d="M12 1.200L16 4.900H8z" fill="#14146c"/><circle cx="3" cy="11.800" r="2" fill="#b8e24c" stroke="#1e5a08" stroke-width=".9"/><path d="M7.800 6.400H13L15.600 9V15.600H7.800z" fill="#fff" stroke="#000" stroke-width="1.100"/><path d="M9.500 9.300h2M9.500 11.300h4.300M9.500 13.300h4.300" stroke="#000" stroke-width="1"/></svg>
<div style="left:155px;top:619px;width:1px;height:19px;background:#0c1a26;"></div>
<div style="left:154px;top:619px;width:1px;height:19px;background:#6a8498;"></div>
<svg style="left:162px;top:621px" width="16" height="16" viewBox="0 0 16 16"><path d="M5 .6H12.500L15.500 3.600V15.400H5z" fill="#fff" stroke="#000" stroke-width="1.100"/><path d="M6.500 2.600h5M6.500 4.300h6" stroke="#2030c8" stroke-width="1.100"/><path d="M13.500 6v8" stroke="#000" stroke-width="1" stroke-dasharray="1 1"/><path d="M6.500 13.500h5" stroke="#000" stroke-width="1" stroke-dasharray="1.500 1"/><path d="M.6 6.800H2.500L3.800 6H9Q10.300 6.200 10 7.500H9.800Q11 8 10.500 9.300Q11 10.500 9.800 11Q10 12.300 8.600 12.400H3L.6 11.400z" fill="#f2e44e" stroke="#000" stroke-width="1" stroke-linejoin="round"/><path d="M6.500 8h3M6.500 9.700h3.300" stroke="#000" stroke-width=".8"/></svg>
<div style="left:243px;top:619px;width:1px;height:19px;background:#0c1a26;"></div>
<div style="left:242px;top:619px;width:1px;height:19px;background:#6a8498;"></div>
<div style="left:4px;top:641px;width:1017px;height:80px;background:#f1f5fa;box-shadow:inset 1px 1px 0 #7fa5bd,inset 2px 2px 0 #0c1a26,inset -1px -1px 0 #ffffff,inset -2px -2px 0 #e9f2f7;"></div>
<div style="left:1022px;top:637px;width:1px;height:88px;background:#0c1a26;"></div>
<div style="left:1023px;top:637px;width:1px;height:88px;background:#4a6478;"></div>
<div style="left:0px;top:724px;width:1024px;height:1px;background:#0c1a26;"></div>
<div style="left:6px;top:643px;width:1013px;height:16px;background:#d1e3ed;"></div>
<div style="left:6px;top:659px;width:1013px;height:1px;background:#0c1a26;"></div>
<div style="left:6px;top:660px;width:1013px;height:1px;background:#5a7488;"></div>
<div style="left:6px;top:643px;width:1013px;height:1px;background:#ffffff;"></div>
<div style="left:55px;top:643px;width:2px;height:17px;background:#0c1a26;"></div>
<div style="left:57px;top:643px;width:1px;height:16px;background:#ffffff;"></div>
<div style="left:255px;top:643px;width:2px;height:17px;background:#0c1a26;"></div>
<div style="left:257px;top:643px;width:1px;height:16px;background:#ffffff;"></div>
<div style="left:735px;top:643px;width:2px;height:17px;background:#0c1a26;"></div>
<div style="left:737px;top:643px;width:1px;height:16px;background:#ffffff;"></div>
<div style="left:6px;top:675px;width:1013px;height:1px;background:#dde7ef;"></div>
<div style="left:6px;top:689px;width:1013px;height:1px;background:#dde7ef;"></div>
<div style="left:6px;top:703px;width:1013px;height:1px;background:#dde7ef;"></div>
<div style="left:6px;top:717px;width:1013px;height:1px;background:#dde7ef;"></div>
<div style="left:56px;top:661px;width:1px;height:58px;background:#dde7ef;"></div>
<div style="left:256px;top:661px;width:1px;height:58px;background:#dde7ef;"></div>
<div style="left:736px;top:661px;width:1px;height:58px;background:#dde7ef;"></div>
<div style="left:0px;top:725px;width:1024px;height:1px;background:#ffffff;"></div>
<div style="left:0px;top:727px;width:1024px;height:1px;background:#7fa5bd;"></div>
<div style="left:0px;top:745px;width:1024px;height:1px;background:#ffffff;"></div>
<svg style="left:1008px;top:730px" width="14" height="14" viewBox="0 0 14 14"><path d="M13.500 1.500L1.500 13.500M13.500 5.500L5.500 13.500M13.500 9.500L9.500 13.500" stroke="#7fa5bd" stroke-width="1.300"/><path d="M13.500 3L3 13.500M13.500 7L7 13.500M13.500 11L11 13.500" stroke="#fff" stroke-width="1"/></svg>
<div style="left:0px;top:746px;width:1024px;height:22px;background:linear-gradient(180deg,#b9c9d3 0,#8fa9ba 12%,#7d9fb6 50%,#6e93ac 100%);"></div>
<svg style="left:0;top:746px" width="130" height="22" viewBox="0 0 130 22"><defs><linearGradient id="gg" x1="0" y1="0" x2="0" y2="1"><stop offset="0" stop-color="#b4bec6"/><stop offset=".5" stop-color="#98a6b0"/><stop offset="1" stop-color="#84929e"/></linearGradient><linearGradient id="gb" x1="0" y1="0" x2="0" y2="1"><stop offset="0" stop-color="#aab6be"/><stop offset="1" stop-color="#8e9ca8"/></linearGradient></defs><path d="M0 0H92L114 22H0z" fill="url(#gg)"/><path d="M92 0L114 22" stroke="#5c7488" stroke-width="1.600"/><path d="M90 0L112 22" stroke="#c4ced4" stroke-width="1"/><rect x="4.500" y="2.500" width="85" height="17.500" rx="4" fill="url(#gb)" stroke="#b8c4cc" stroke-width="1"/><path d="M9.500 15L13.500 6.500L19.500 15M11.500 13L17 10.500" stroke="#1c2c38" stroke-width="1.500" fill="none"/></svg>
<svg style="left:122px;top:749px" width="16" height="16" viewBox="0 0 16 16"><rect x="0" y="1" width="16" height="15" fill="#1c5c5a"/><rect x="2" y="4" width="10.500" height="10.500" fill="#f2ead2" stroke="#2a2a2a" stroke-width="1"/><rect x="4.300" y="8.200" width="4" height="4" fill="#f8f0e0" stroke="#a83030" stroke-width=".9"/><path d="M7.500 10L15 1" stroke="#1a1a1a" stroke-width="2.600"/><path d="M8 9.300L14.800 1.200" stroke="#ecd44c" stroke-width="1.400"/></svg>
<svg style="left:144px;top:752px" width="16" height="9" viewBox="0 0 16 9"><g fill="none" stroke="#6a5c00" stroke-width="3.200"><circle cx="3.200" cy="4.200" r="1.900"/><circle cx="8" cy="3.800" r="1.900"/><circle cx="12.800" cy="4.200" r="1.900"/></g><g fill="none" stroke="#ecdc24" stroke-width="1.800"><circle cx="3.200" cy="4.200" r="1.900"/><circle cx="8" cy="3.800" r="1.900"/><circle cx="12.800" cy="4.200" r="1.900"/></g></svg>
<svg style="left:166px;top:749px" width="16" height="16" viewBox="0 0 16 16"><circle cx="8" cy="8" r="7.500" fill="#6a8ca8" stroke="#4c6c88" stroke-width="1"/><circle cx="8" cy="8" r="6" fill="#5a7e9c"/><circle cx="3.800" cy="11" r=".9" fill="#fff"/><circle cx="6.200" cy="11" r=".9" fill="#fff"/><circle cx="8.600" cy="11" r=".9" fill="#fff"/><path d="M11 12V6.500M8.500 8.500L11 5.200L13.500 8.500" stroke="#fff" stroke-width="1.800" fill="none"/></svg>
<div style="left:186px;top:747px;width:157px;height:21px;background:linear-gradient(180deg,#8fb1c9 0,#86a9c3 45%,#7a9fba 55%,#7297b3 100%);"></div>
<div style="left:186px;top:747px;width:1px;height:21px;background:#a9c5d8;"></div>
<div style="left:342px;top:747px;width:1px;height:21px;background:#5f86a2;"></div>
<div style="left:343px;top:747px;width:159px;height:21px;background:linear-gradient(180deg,#8fb1c9 0,#86a9c3 45%,#7a9fba 55%,#7297b3 100%);"></div>
<div style="left:343px;top:747px;width:1px;height:21px;background:#a9c5d8;"></div>
<div style="left:501px;top:747px;width:1px;height:21px;background:#5f86a2;"></div>
<div style="left:502px;top:747px;width:158px;height:21px;background:linear-gradient(180deg,#8fb1c9 0,#86a9c3 45%,#7a9fba 55%,#7297b3 100%);"></div>
<div style="left:502px;top:747px;width:1px;height:21px;background:#a9c5d8;"></div>
<div style="left:659px;top:747px;width:1px;height:21px;background:#5f86a2;"></div>
<div style="left:660px;top:747px;width:160px;height:21px;background:linear-gradient(180deg,#8fb1c9 0,#86a9c3 45%,#7a9fba 55%,#7297b3 100%);"></div>
<div style="left:660px;top:747px;width:1px;height:21px;background:#a9c5d8;"></div>
<div style="left:819px;top:747px;width:1px;height:21px;background:#5f86a2;"></div>
<svg style="left:188px;top:748px" width="16" height="16" viewBox="0 0 16 16"><circle cx="8.500" cy="7.500" r="5.300" fill="#2c5cc4"/><path d="M7 4.500Q9 3.500 10.500 5Q9 5 8.500 6z" fill="#8ab8f0"/><path d="M2.500 3.500Q1 6 1.500 9.500Q3 14.500 8 15Q13.500 15 15 9.500Q15.500 6.500 14 4.500Q14 8.500 12 10.500Q9.500 12.500 6.500 11Q4 9.500 4.500 6.500Q3 5.500 2.500 3.500z" fill="#e8781c" stroke="#b8500c" stroke-width=".6"/><path d="M4.500 6.500Q6 6 7 7Q6 8 6.500 9" fill="#f4b040"/></svg>
<svg style="left:347px;top:749px" width="15" height="15" viewBox="0 0 15 15"><rect x=".6" y="3.200" width="13.800" height="11" rx="1.600" fill="#f2e2aa" stroke="#3a3020" stroke-width="1.100"/><rect x="5.500" y=".6" width="4" height="3.800" rx=".8" fill="#cca862" stroke="#3a3020" stroke-width="1"/><circle cx="7.500" cy="2.300" r=".8" fill="#c83030"/><path d="M3 7.300h6.500M3 9.800h9M3 12.200h5.500" stroke="#3a3020" stroke-width="1.400"/></svg>
<svg style="left:505px;top:749px" width="16" height="16" viewBox="0 0 16 16"><path d="M8 1h2.2v2.2l5.3 1-1 4.3h-2.2l.8-2.8-5.1-1z" fill="#2aa39b"/><path d="M6.5 6.5h7l1.5 2h-10z" fill="#1f6f6a"/><path d="M2.5 9L14 8.3l2 1.7-2 5.2H.6z" fill="#e6dcc4" stroke="#4a3c30" stroke-width=".8"/><path d="M3 11.2h10M2.3 13.2h11" stroke="#8a6a58" stroke-width=".9"/><rect x="6" y="10.3" width="4" height="1.6" fill="#b03030"/></svg>
<svg style="left:664px;top:750px" width="14" height="13" viewBox="0 0 14 13"><rect x="0" y="0" width="14" height="11.500" fill="#000"/><path d="M1 1h12" stroke="#9a9a9a" stroke-width="1.200" stroke-dasharray="1 1"/><text x="1" y="9.300" font-family='"Liberation Sans",sans-serif' font-size="7.500" font-weight="bold" fill="#fff" textLength="11.500" lengthAdjust="spacingAndGlyphs">C:\</text></svg>
<div style="left:820px;top:746px;width:204px;height:22px;background:linear-gradient(180deg,#b6c0c8 0,#a4b0ba 30%,#909eaa 100%);"></div>
<div style="left:820px;top:746px;width:1px;height:22px;background:#c8d2d8;"></div>
<svg style="left:824px;top:749px" width="16" height="16" viewBox="0 0 16 16"><path d="M8 .4L15.600 8L8 15.600L.4 8z" fill="#3c8cd2" stroke="#1e5e9c" stroke-width="1"/><path d="M4.800 11.300L8.600 3.800L11 11.800M5.500 9.500L12.300 7" stroke="#e6f4ff" stroke-width="1.200" fill="none"/></svg>
<svg style="left:846px;top:749px" width="16" height="16" viewBox="0 0 16 16"><path d="M.6 8L7.500 1.500V14.500z" fill="#f0da44" stroke="#4a3c00" stroke-width="1"/><rect x="7.500" y="2.800" width="1.600" height="10.400" fill="#4a3c00"/><path d="M11 5.200Q13 8 11 10.800M13.300 3.500Q16.300 8 13.300 12.500" stroke="#d0d8dc" stroke-width="1.100" fill="none"/><path d="M10.500 8h3" stroke="#d0d8dc" stroke-width="1"/></svg>
<svg style="left:868px;top:749px" width="16" height="16" viewBox="0 0 16 16"><circle cx="8" cy="8" r="7.500" fill="#a8228e" stroke="#6c105c" stroke-width="1"/><path d="M3 5Q8 1.500 13 5" stroke="#d468c0" stroke-width="1.200" fill="none"/><rect x="2.600" y="6.800" width="10.800" height="3" fill="#fff"/></svg>
<svg style="left:890px;top:748px" width="16" height="16" viewBox="0 0 16 16"><rect x="0" y="0" width="16" height="16" fill="#040404"/><text x="1.600" y="12.800" font-family='"Liberation Sans",sans-serif' font-size="12" fill="#fff" textLength="13" lengthAdjust="spacingAndGlyphs">EN</text></svg>
<svg style="left:912px;top:749px" width="16" height="16" viewBox="0 0 16 16"><path d="M1 15.500L3.300 8H12.700L15 15.500z" fill="#20a432" stroke="#0a4a12" stroke-width="1"/><rect x=".6" y="3.200" width="14.800" height="4.200" rx="2" fill="#2abc3c" stroke="#0a4a12" stroke-width="1"/><circle cx="8" cy="11.300" r="2.900" fill="#e8f2e0" stroke="#0a4a12" stroke-width="1"/><path d="M6.800 10.300L8 12.500L9.500 9.800" stroke="#0a4a12" stroke-width="1" fill="none"/><path d="M5 2.500L6.500 1M11 2.500L9.500 1M8 2V.5" stroke="#0a4a12" stroke-width="1"/></svg>
<svg style="left:934px;top:749px" width="16" height="16" viewBox="0 0 16 16"><rect x="6" y=".8" width="9.200" height="7.600" fill="#c8c8c8" stroke="#000" stroke-width="1"/><rect x="7.600" y="2.300" width="6" height="4.200" fill="#101418"/><path d="M8 9.500h7.500v2H8z" fill="#b0b0b0" stroke="#000" stroke-width=".9"/><rect x="1" y="5" width="9.200" height="7.400" fill="#d4d4d4" stroke="#000" stroke-width="1"/><rect x="2.600" y="6.500" width="6" height="4.200" fill="#1c2026"/><rect x=".6" y="12.800" width="10.400" height="2.400" fill="#b8b8b8" stroke="#000" stroke-width=".9"/></svg>
<svg style="left:957px;top:749px" width="14" height="16" viewBox="0 0 14 16"><circle cx="7" cy="2.700" r="2.300" fill="#e8caa2" stroke="#4a3010" stroke-width=".9"/><rect x="1.500" y="5" width="11" height="6.600" rx="2.200" fill="#20a83a" stroke="#0a4a12" stroke-width="1"/><rect x="3.500" y="11" width="7" height="3.600" fill="#5038b4"/><rect x="2.800" y="14.300" width="3.400" height="1.600" fill="#0a0a0a"/><rect x="7.800" y="14.300" width="3.400" height="1.600" fill="#0a0a0a"/></svg>
<div style="left:0px;top:746px;width:1024px;height:1px;background:#6c8ca4;"></div>
<svg id="t" width="1024" height="768" viewBox="0 0 1024 768">
<text x="20.5" y="13.1" font-family='"Liberation Sans",sans-serif' font-size="12.4" fill="#d8d8d8" font-weight="bold" textLength="268.0" lengthAdjust="spacingAndGlyphs" stroke="#d8d8d8" stroke-width="0.3">Dev-Pascal 1.9.2 - C:\Dev-Pas\Orlangur.rs.pas</text>
<text x="26.5" y="31" font-family='"Liberation Sans",sans-serif' font-size="13" fill="#13222e" textLength="15.5" lengthAdjust="spacingAndGlyphs" stroke="#13222e" stroke-width="0.3">File</text>
<text x="54.5" y="31" font-family='"Liberation Sans",sans-serif' font-size="13" fill="#13222e" textLength="17.0" lengthAdjust="spacingAndGlyphs" stroke="#13222e" stroke-width="0.3">Edit</text>
<text x="84.5" y="31" font-family='"Liberation Sans",sans-serif' font-size="13" fill="#13222e" textLength="33.5" lengthAdjust="spacingAndGlyphs" stroke="#13222e" stroke-width="0.3">Search</text>
<text x="130" y="31" font-family='"Liberation Sans",sans-serif' font-size="13" fill="#13222e" textLength="23.0" lengthAdjust="spacingAndGlyphs" stroke="#13222e" stroke-width="0.3">View</text>
<text x="210.5" y="31" font-family='"Liberation Sans",sans-serif' font-size="13" fill="#13222e" textLength="38.5" lengthAdjust="spacingAndGlyphs" stroke="#13222e" stroke-width="0.3">Execute</text>
<text x="261.5" y="31" font-family='"Liberation Sans",sans-serif' font-size="13" fill="#13222e" textLength="35.5" lengthAdjust="spacingAndGlyphs" stroke="#13222e" stroke-width="0.3">Options</text>
<text x="310" y="31" font-family='"Liberation Sans",sans-serif' font-size="13" fill="#13222e" textLength="25.0" lengthAdjust="spacingAndGlyphs" stroke="#13222e" stroke-width="0.3">Tools</text>
<text x="347" y="31" font-family='"Liberation Sans",sans-serif' font-size="13" fill="#13222e" textLength="39.5" lengthAdjust="spacingAndGlyphs" stroke="#13222e" stroke-width="0.3">Window</text>
<text x="398.5" y="31" font-family='"Liberation Sans",sans-serif' font-size="13" fill="#13222e" textLength="22.0" lengthAdjust="spacingAndGlyphs" stroke="#13222e" stroke-width="0.3">Help</text>
<text x="165.5" y="31" font-family='"Liberation Sans",sans-serif' font-size="13" fill="#7ba3bd" textLength="32.0" lengthAdjust="spacingAndGlyphs" stroke="#7ba3bd" stroke-width="0.3">Project</text>
<text x="201.5" y="95" font-family='"Liberation Sans",sans-serif' font-size="20" fill="#22b6da" font-weight="bold" textLength="12.0" lengthAdjust="spacingAndGlyphs" stroke="#1487a8" stroke-width=".5">?</text>
<text x="229.5" y="93" font-family='"Liberation Sans",sans-serif' font-size="15" fill="#e01a1a" font-weight="bold" textLength="8.0" lengthAdjust="spacingAndGlyphs" stroke="#e01a1a" stroke-width="0.3">?</text>
<text x="366.5" y="91.8" font-family='"Liberation Sans",sans-serif' font-size="13" fill="#13222e" textLength="21.5" lengthAdjust="spacingAndGlyphs" stroke="#13222e" stroke-width="0.3">New</text>
<text x="438.5" y="91.8" font-family='"Liberation Sans",sans-serif' font-size="13" fill="#13222e" textLength="25.5" lengthAdjust="spacingAndGlyphs" stroke="#13222e" stroke-width="0.3">Insert</text>
<text x="518.5" y="85.6" font-family='"Liberation Sans",sans-serif' font-size="13" fill="#13222e" textLength="31.5" lengthAdjust="spacingAndGlyphs" stroke="#13222e" stroke-width="0.3">Toggle</text>
<text x="509" y="98.9" font-family='"Liberation Sans",sans-serif' font-size="13" fill="#13222e" textLength="51.0" lengthAdjust="spacingAndGlyphs" stroke="#13222e" stroke-width="0.3">bookmarks</text>
<text x="607.5" y="85.6" font-family='"Liberation Sans",sans-serif' font-size="13" fill="#13222e" textLength="22.5" lengthAdjust="spacingAndGlyphs" stroke="#13222e" stroke-width="0.3">Goto</text>
<text x="594" y="98.9" font-family='"Liberation Sans",sans-serif' font-size="13" fill="#13222e" textLength="51.0" lengthAdjust="spacingAndGlyphs" stroke="#13222e" stroke-width="0.3">bookmarks</text>
<text x="37.3" y="117.5" font-family='"Liberation Mono",monospace' font-size="11.6" fill="#000" font-weight="bold" textLength="54.8" lengthAdjust="spacingAndGlyphs" stroke="#000" stroke-width="0.3">Program</text>
<text x="101.3" y="117.5" font-family='"Liberation Mono",monospace' font-size="11.6" fill="#000" textLength="30.8" lengthAdjust="spacingAndGlyphs" stroke="none">Prs;</text>
<text x="37.3" y="134.5" font-family='"Liberation Mono",monospace' font-size="11.6" fill="#000" font-weight="bold" textLength="30.8" lengthAdjust="spacingAndGlyphs" stroke="#000" stroke-width="0.3">Uses</text>
<text x="37.3" y="151.5" font-family='"Liberation Mono",monospace' font-size="11.6" fill="#000" textLength="30.8" lengthAdjust="spacingAndGlyphs" stroke="none">Crt;</text>
<text x="37.3" y="168.5" font-family='"Liberation Mono",monospace' font-size="11.6" fill="#000" font-weight="bold" textLength="22.8" lengthAdjust="spacingAndGlyphs" stroke="#000" stroke-width="0.3">Var</text>
<text x="37.3" y="185.5" font-family='"Liberation Mono",monospace' font-size="11.6" fill="#000" textLength="14.8" lengthAdjust="spacingAndGlyphs" stroke="none">N:</text>
<text x="61.3" y="185.5" font-family='"Liberation Mono",monospace' font-size="11.6" fill="#000" font-weight="bold" textLength="46.8" lengthAdjust="spacingAndGlyphs" stroke="#000" stroke-width="0.3">string</text>
<text x="109.3" y="185.5" font-family='"Liberation Mono",monospace' font-size="11.6" fill="#000" textLength="6.8" lengthAdjust="spacingAndGlyphs" stroke="none">;</text>
<text x="37.3" y="202.5" font-family='"Liberation Mono",monospace' font-size="11.6" fill="#000" font-weight="bold" textLength="38.8" lengthAdjust="spacingAndGlyphs" stroke="#000" stroke-width="0.3">begin</text>
<text x="37.3" y="219.5" font-family='"Liberation Mono",monospace' font-size="11.6" fill="#000" textLength="54.8" lengthAdjust="spacingAndGlyphs" stroke="none">ClrScr;</text>
<text x="37.3" y="236.5" font-family='"Liberation Mono",monospace' font-size="11.6" fill="#000" textLength="46.8" lengthAdjust="spacingAndGlyphs" stroke="none">Write(</text>
<text x="85.3" y="236.5" font-family='"Liberation Mono",monospace' font-size="11.6" fill="#c00000" textLength="158.8" lengthAdjust="spacingAndGlyphs" stroke="none">&#x27;Введите своё имя: &#x27;</text>
<text x="245.3" y="236.5" font-family='"Liberation Mono",monospace' font-size="11.6" fill="#000" textLength="14.8" lengthAdjust="spacingAndGlyphs" stroke="none">);</text>
<text x="37.3" y="253.5" font-family='"Liberation Mono",monospace' font-size="11.6" fill="#000" textLength="78.8" lengthAdjust="spacingAndGlyphs" stroke="none">ReadLn(N);</text>
<text x="37.3" y="270.5" font-family='"Liberation Mono",monospace' font-size="11.6" fill="#000" textLength="62.8" lengthAdjust="spacingAndGlyphs" stroke="none">WriteLn(</text>
<text x="101.3" y="270.5" font-family='"Liberation Mono",monospace' font-size="11.6" fill="#c00000" textLength="94.8" lengthAdjust="spacingAndGlyphs" stroke="none">&#x27;Ваше имя: &#x27;</text>
<text x="197.3" y="270.5" font-family='"Liberation Mono",monospace' font-size="11.6" fill="#000" textLength="38.8" lengthAdjust="spacingAndGlyphs" stroke="none">, N);</text>
<text x="37.3" y="287.5" font-family='"Liberation Mono",monospace' font-size="11.6" fill="#000" textLength="62.8" lengthAdjust="spacingAndGlyphs" stroke="none">ReadKey;</text>
<text x="37.3" y="304.5" font-family='"Liberation Mono",monospace' font-size="11.6" fill="#000" font-weight="bold" textLength="30.8" lengthAdjust="spacingAndGlyphs" stroke="#000" stroke-width="0.3">end.</text>
<text x="46" y="344.5" font-family='"Liberation Sans",sans-serif' font-size="13" fill="#d4dcdf" textLength="105.0" lengthAdjust="spacingAndGlyphs" stroke="#d4dcdf" stroke-width="0.3">Compilation completed</text>
<text x="59.5" y="367.5" font-family='"Liberation Sans",sans-serif' font-size="13" fill="#13222e" textLength="53.5" lengthAdjust="spacingAndGlyphs" stroke="#13222e" stroke-width="0.3">Information:</text>
<text x="59.5" y="391.5" font-family='"Liberation Sans",sans-serif' font-size="13" fill="#13222e" textLength="35.0" lengthAdjust="spacingAndGlyphs" stroke="#13222e" stroke-width="0.3">Project:</text>
<text x="63.5" y="410.5" font-family='"Liberation Sans",sans-serif' font-size="13" fill="#13222e" textLength="131.5" lengthAdjust="spacingAndGlyphs" stroke="#13222e" stroke-width="0.3">C:\Dev-Pas\Orlangur.rs.pas</text>
<text x="60" y="449.5" font-family='"Liberation Sans",sans-serif' font-size="13" fill="#13222e" textLength="54.5" lengthAdjust="spacingAndGlyphs" stroke="#13222e" stroke-width="0.3">Total errors:</text>
<text x="162" y="449.6" font-family='"Liberation Sans",sans-serif' font-size="13" fill="#13222e" textLength="6.0" lengthAdjust="spacingAndGlyphs" stroke="#13222e" stroke-width="0.3">0</text>
<text x="59.5" y="479.5" font-family='"Liberation Sans",sans-serif' font-size="13" fill="#13222e" textLength="83.0" lengthAdjust="spacingAndGlyphs" stroke="#13222e" stroke-width="0.3">Size of output file:</text>
<text x="162" y="481.5" font-family='"Liberation Sans",sans-serif' font-size="13" fill="#13222e" textLength="29.5" lengthAdjust="spacingAndGlyphs" stroke="#13222e" stroke-width="0.3">20992</text>
<text x="251.5" y="479.5" font-family='"Liberation Sans",sans-serif' font-size="13" fill="#13222e" textLength="24.5" lengthAdjust="spacingAndGlyphs" stroke="#13222e" stroke-width="0.3">bytes</text>
<text x="79.5" y="528" font-family='"Liberation Sans",sans-serif' font-size="13" fill="#13222e" textLength="42.0" lengthAdjust="spacingAndGlyphs" stroke="#13222e" stroke-width="0.3">Continue</text>
<text x="160" y="528" font-family='"Liberation Sans",sans-serif' font-size="13" fill="#7ba3bd" textLength="115.5" lengthAdjust="spacingAndGlyphs" stroke="#7ba3bd" stroke-width="0.3">Show all compiler results</text>
<text x="95.5" y="560" font-family='"Liberation Sans",sans-serif' font-size="13" fill="#13222e" textLength="68.0" lengthAdjust="spacingAndGlyphs" stroke="#13222e" stroke-width="0.3">&gt;&gt; Execute &lt;&lt;</text>
<text x="222.5" y="560" font-family='"Liberation Sans",sans-serif' font-size="13" fill="#13222e" textLength="54.0" lengthAdjust="spacingAndGlyphs" stroke="#13222e" stroke-width="0.3">Parameters</text>
<text x="345.5" y="134" font-family='"Liberation Sans",sans-serif' font-size="13" fill="#d9ecf6" font-weight="bold" textLength="157.5" lengthAdjust="spacingAndGlyphs" stroke="#d9ecf6" stroke-width="0.3">C:\Dev-Pas\Orlangur.rs.exe</text>
<text x="327.5" y="150" font-family='"Liberation Mono",monospace' font-size="12" fill="#c0c0c0" font-weight="bold" textLength="7.5" lengthAdjust="spacingAndGlyphs" stroke="#c0c0c0" stroke-width="0.3">┬</text>
<text x="335.5" y="151.8" font-family='"Liberation Mono",monospace' font-size="11.2" fill="#c0c0c0" font-weight="bold" textLength="78.5" lengthAdjust="spacingAndGlyphs" stroke="#c0c0c0" stroke-width="0.3">тхфшЄх ётю</text>
<text x="415.5" y="150" font-family='"Liberation Mono",monospace' font-size="12" fill="#c0c0c0" font-weight="bold" textLength="7.5" lengthAdjust="spacingAndGlyphs" stroke="#c0c0c0" stroke-width="0.3">╕</text>
<text x="431.5" y="151.8" font-family='"Liberation Mono",monospace' font-size="11.2" fill="#c0c0c0" font-weight="bold" textLength="14.5" lengthAdjust="spacingAndGlyphs" stroke="#c0c0c0" stroke-width="0.3">шь</text>
<text x="455" y="151.8" font-family='"Liberation Mono",monospace' font-size="11.2" fill="#c0c0c0" textLength="8.0" lengthAdjust="spacingAndGlyphs" stroke="#c0c0c0" stroke-width="0.3" font-weight="bold">:</text>
<text x="12" y="609.5" font-family='"Liberation Sans",sans-serif' font-size="13" fill="#13222e" textLength="23.5" lengthAdjust="spacingAndGlyphs" stroke="#13222e" stroke-width="0.3">43: 9</text>
<text x="207.5" y="609.5" font-family='"Liberation Sans",sans-serif' font-size="13" fill="#13222e" textLength="39.5" lengthAdjust="spacingAndGlyphs" stroke="#13222e" stroke-width="0.3">Insertion</text>
<text x="297.5" y="609.5" font-family='"Liberation Sans",sans-serif' font-size="13" fill="#13222e" textLength="62.5" lengthAdjust="spacingAndGlyphs" stroke="#13222e" stroke-width="0.3">12 lines in file</text>
<text x="30.5" y="630.5" font-family='"Liberation Sans",sans-serif' font-size="13" fill="#13222e" textLength="39.5" lengthAdjust="spacingAndGlyphs" stroke="#13222e" stroke-width="0.3">Compiler</text>
<text x="104.5" y="632.5" font-family='"Liberation Sans",sans-serif' font-size="13" fill="#13222e" textLength="45.5" lengthAdjust="spacingAndGlyphs" stroke="#13222e" stroke-width="0.3">Resource</text>
<text x="184.5" y="632.5" font-family='"Liberation Sans",sans-serif' font-size="13" fill="#13222e" textLength="53.5" lengthAdjust="spacingAndGlyphs" stroke="#13222e" stroke-width="0.3">Compile log</text>
<text x="12.5" y="655" font-family='"Liberation Sans",sans-serif' font-size="13" fill="#13222e" textLength="33.0" lengthAdjust="spacingAndGlyphs" stroke="#13222e" stroke-width="0.3">Line/...</text>
<text x="62.5" y="655" font-family='"Liberation Sans",sans-serif' font-size="13" fill="#13222e" textLength="18.5" lengthAdjust="spacingAndGlyphs" stroke="#13222e" stroke-width="0.3">Unit</text>
<text x="262.5" y="655" font-family='"Liberation Sans",sans-serif' font-size="13" fill="#13222e" textLength="42.5" lengthAdjust="spacingAndGlyphs" stroke="#13222e" stroke-width="0.3">Message</text>
<text x="262.5" y="672.5" font-family='"Liberation Sans",sans-serif' font-size="13" fill="#000" textLength="236.5" lengthAdjust="spacingAndGlyphs" stroke="#000" stroke-width="0.3">C:\Dev-Pas\Orlangur.rs.pas compiled successfully</text>
<text x="29" y="760.5" font-family='"Liberation Sans",sans-serif' font-size="11.5" fill="#3a5264" font-weight="bold" textLength="53.5" lengthAdjust="spacingAndGlyphs" stroke="#3a5264" stroke-width="0.3">START</text>
<text x="207" y="759.5" font-family='"Liberation Sans",sans-serif' font-size="10.4" fill="#3c5a72" textLength="55.5" lengthAdjust="spacingAndGlyphs" stroke="#3c5a72" stroke-width="0.3">ФОРУМ</text>
<text x="274" y="759.5" font-family='"Liberation Sans",sans-serif' font-size="10.4" fill="#3c5a72" textLength="7.0" lengthAdjust="spacingAndGlyphs" stroke="#3c5a72" stroke-width="0.3">&quot;</text>
<text x="286" y="759.5" font-family='"Liberation Sans",sans-serif' font-size="10.4" fill="#3c5a72" textLength="31.0" lengthAdjust="spacingAndGlyphs" stroke="#3c5a72" stroke-width="0.3">ВСЦ</text>
<text x="329" y="759.5" font-family='"Liberation Sans",sans-serif' font-size="10.4" fill="#3c5a72" textLength="10.0" lengthAdjust="spacingAndGlyphs" stroke="#3c5a72" stroke-width="0.3">...</text>
<text x="365" y="759.5" font-family='"Liberation Sans",sans-serif' font-size="10.4" fill="#3c5a72" textLength="75.0" lengthAdjust="spacingAndGlyphs" stroke="#3c5a72" stroke-width="0.3">FREENUX</text>
<text x="452.5" y="759.5" font-family='"Liberation Sans",sans-serif' font-size="10.4" fill="#3c5a72" textLength="14.0" lengthAdjust="spacingAndGlyphs" stroke="#3c5a72" stroke-width="0.3">(В</text>
<text x="480" y="759.5" font-family='"Liberation Sans",sans-serif' font-size="10.4" fill="#3c5a72" textLength="10.0" lengthAdjust="spacingAndGlyphs" stroke="#3c5a72" stroke-width="0.3">...</text>
<text x="523" y="759.5" font-family='"Liberation Sans",sans-serif' font-size="10.4" fill="#3c5a72" textLength="103.0" lengthAdjust="spacingAndGlyphs" stroke="#3c5a72" stroke-width="0.3">DEV-PASCAL</text>
<text x="681" y="759.5" font-family='"Liberation Sans",sans-serif' font-size="10.4" fill="#3c5a72" textLength="137.0" lengthAdjust="spacingAndGlyphs" stroke="#3c5a72" stroke-width="0.3">C:\DEV-PAS\OR...</text>
<text x="366" y="766" font-family='"Liberation Mono",monospace' font-size="8" fill="#9fc0d6" font-weight="bold" textLength="136.0" lengthAdjust="spacingAndGlyphs" stroke="#9fc0d6" stroke-width="0.3">the SecureBSE logo (c) m</text>
<text x="524" y="766" font-family='"Liberation Mono",monospace' font-size="8" fill="#9fc0d6" font-weight="bold" textLength="284.0" lengthAdjust="spacingAndGlyphs" stroke="#9fc0d6" stroke-width="0.3">y in motion 97-2k | pixelated by cy at photonfx.com</text>
<text x="986.5" y="760.6" font-family='"Liberation Sans",sans-serif' font-size="13.6" fill="#567084" textLength="23.5" lengthAdjust="spacingAndGlyphs" stroke="#567084" stroke-width=".55">2:11</text>
</svg>
</div></body></html>
